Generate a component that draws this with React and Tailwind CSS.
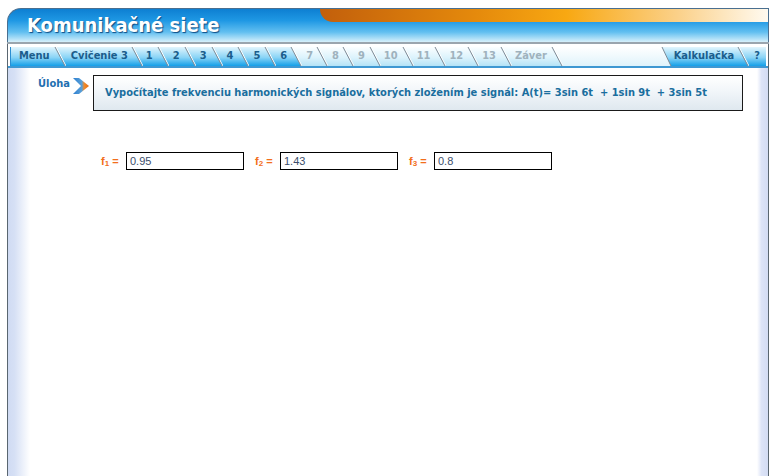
import React from 'react';

const tabFont = { fontFamily: '"DejaVu Sans Condensed", "DejaVu Sans", sans-serif' };

const tabs = [
  { label: 'Menu', on: true, pl: 'pl-[8px]', pr: 'pr-[4px]' },
  { label: 'Cvičenie 3', on: true, pl: 'pl-[5px]', pr: 'pr-[3px]' },
  { label: '1', on: true, pl: 'pl-[3px]' },
  { label: '2', on: true },
  { label: '3', on: true },
  { label: '4', on: true },
  { label: '5', on: true },
  { label: '6', on: true, pr: 'pr-[3px]' },
  { label: '7', pr: 'pr-[3px]' },
  { label: '8', pr: 'pr-[3px]' },
  { label: '9' },
  { label: '10', pl: 'pl-[3px]' },
  { label: '11', pl: 'pl-[3px]' },
  { label: '12', pl: 'pl-[3px]' },
  { label: '13', pl: 'pl-[3px]' },
  { label: 'Záver', pl: 'pl-[3px]' },
];

const fill = on => (on ? 'url(#tabOn)' : 'url(#tabOff)');

// slanted divider between two tabs
const Sep = ({ left, right }) => (
  <svg width="12" height="19" viewBox="0 0 12 19" className="block shrink-0">
    <polygon points="0,0 1,0 11,19 0,19" fill={left} />
    <polygon points="1,0 12,0 12,19 11,19" fill={right} />
    <line x1="2" y1="0" x2="12" y2="19" stroke="#ffffff" strokeWidth="1" />
    <line x1="1" y1="0" x2="11" y2="19" stroke="#7d8a96" strokeWidth="1" />
  </svg>
);

const Tab = ({ label, on, pl = 'pl-[4px]', pr = 'pr-[4px]' }) => (
  <div
    className={`h-[19px] flex items-center text-[11px] font-bold ${pl} ${pr} ${
      on ? 'text-[#1b5d8c] bg-[linear-gradient(#e2f5fd,#8ad4f6_55%,#149fe8)]' : 'text-[#9fb2bd] bg-[linear-gradient(#fbfeff,#dcf3fc_55%,#b5e3f6)]'
    }`}
    style={tabFont}
  >
    {label}
  </div>
);

const Arrow = () => (
  <svg width="18" height="18" viewBox="0 0 18 18" className="block">
    <defs>
      <linearGradient id="arr" x1="0" y1="0" x2="1" y2="0">
        <stop offset="0" stopColor="#2d7fd0" />
        <stop offset="0.55" stopColor="#5aa0d8" />
        <stop offset="0.7" stopColor="#f08a2a" />
        <stop offset="1" stopColor="#e86e10" />
      </linearGradient>
    </defs>
    <polygon points="1,1 7,1 17,9 7,17 1,17 9,9" fill="url(#arr)" />
  </svg>
);

const Field = ({ sub, value }) => (
  <div className="flex items-center gap-[6px]">
    <span className="text-[11px] font-bold text-[#f26e1c] w-[19px] whitespace-nowrap" style={{ fontFamily: '"Liberation Sans", Arial, sans-serif' }}>
      f<sub className="text-[8px] align-baseline relative top-[1px]">{sub}</sub> =
    </span>
    <div
      className="w-[118px] h-[18px] border border-black bg-white flex items-center pl-[3px] text-[11px] text-[#3c4e6c]"
      style={{ fontFamily: '"Liberation Sans", Arial, sans-serif' }}
    >
      {value}
    </div>
  </div>
);

export default function App() {
  return (
    <div className="w-[777px] h-[476px] bg-white overflow-hidden pt-[8px] pl-[7px]">
      <svg width="0" height="0" className="absolute">
        <defs>
          <linearGradient id="tabOn" x1="0" y1="0" x2="0" y2="1">
            <stop offset="0" stopColor="#e2f5fd" />
            <stop offset="0.55" stopColor="#8ad4f6" />
            <stop offset="1" stopColor="#149fe8" />
          </linearGradient>
          <linearGradient id="tabOff" x1="0" y1="0" x2="0" y2="1">
            <stop offset="0" stopColor="#fbfeff" />
            <stop offset="0.55" stopColor="#dcf3fc" />
            <stop offset="1" stopColor="#b5e3f6" />
          </linearGradient>
          <linearGradient id="tabNone" x1="0" y1="0" x2="0" y2="1">
            <stop offset="0" stopColor="#ffffff" />
            <stop offset="1" stopColor="#dff3fb" />
          </linearGradient>
        </defs>
      </svg>

      <div className="w-[762px] h-[468px] flex flex-col">
        {/* header */}
        <div className="relative h-[34px] shrink-0 rounded-tl-[14px] border-l border-t border-r border-[#4a6f90] bg-[linear-gradient(#0d7fd2,#1f98e4_35%,#62bff0_70%,#d6f0fb)] overflow-hidden">
          <div className="absolute top-0 left-[312px] right-0 h-[13px] rounded-bl-[16px] bg-[linear-gradient(to_right,#c25f0c,#e58a0c_35%,#f8a812_55%,#fbd18a_80%,#fffaf0)]" />
          <div
            className="relative pl-[19px] pt-[4px] text-[20px] leading-[24px] font-bold text-white [text-shadow:1px_1px_1px_#0b4b85]"
            style={tabFont}
          >
            Komunikačné siete
          </div>
        </div>
        <div className="h-[2px] shrink-0 bg-[#9aa5ae]" />
        <div className="h-[3px] shrink-0 border-l border-r border-[#5a6670] bg-white" />

        {/* tabs */}
        <div className="h-[21px] shrink-0 flex border-l border-r border-[#5a6670] pl-[2px] pr-[2px] bg-white">
          <div className="flex flex-1 h-[19px] border-l border-[#2b8ed2]">
            {tabs.map((t, i) => (
              <React.Fragment key={t.label}>
                <Tab {...t} />
                <Sep left={fill(t.on)} right={i < tabs.length - 1 ? fill(tabs[i + 1].on) : 'url(#tabNone)'} />
              </React.Fragment>
            ))}
            <div className="flex-1 bg-[linear-gradient(#ffffff,#dff3fb)]" />
            <svg width="11" height="19" viewBox="0 0 11 19" className="block shrink-0">
              <polygon points="0,0 1,0 10,19 0,19" fill="url(#tabNone)" />
              <polygon points="1,0 11,0 11,19 10,19" fill="url(#tabOn)" />
              <line x1="1" y1="0" x2="10" y2="19" stroke="#7d8a96" strokeWidth="1" />
            </svg>
            <Tab label="Kalkulačka" on pl="pl-[2px]" pr="pr-[3px]" />
            <Sep left="url(#tabOn)" right="url(#tabOn)" />
            <Tab label="?" on pl="pl-[5px]" pr="pr-[6px]" />
          </div>
        </div>
        <div className="h-[2px] shrink-0 border-l border-r border-[#5a6670] bg-[#3f98d2] -mt-[2px]" />

        {/* content */}
        <div className="flex-1 flex border-l border-r border-[#5a6670]">
          <div className="w-[22px] shrink-0 bg-[linear-gradient(to_right,#d0dbf3,#d6e0f5_30%,#ffffff)]" />
          <div className="flex-1 bg-white pt-[7px]">
            <div className="flex items-start">
              <div className="flex items-start pl-[8px] pt-[2px] w-[63px]">
                <span className="text-[11px] font-bold text-[#1f6fb0] leading-[14px]" style={tabFont}>
                  Úloha
                </span>
                <div className="ml-[2px]">
                  <Arrow />
                </div>
              </div>
              <div
                className="w-[650px] h-[36px] border border-[#1a1a1a] bg-[linear-gradient(#ffffff,#f3f7fa_40%,#dfe8ef)] flex items-center pl-[11px] text-[11px] font-bold text-[#1a6e9e]"
                style={tabFont}
              >
                Vypočítajte frekvenciu harmonických signálov, ktorých zložením je signál: A(t)= 3sin 6t&nbsp; + 1sin 9t&nbsp; + 3sin 5t
              </div>
            </div>
            <div className="flex gap-[11px] pl-[71px] mt-[41px]">
              <Field sub="1" value="0.95" />
              <Field sub="2" value="1.43" />
              <Field sub="3" value="0.8" />
            </div>
          </div>
          <div className="w-[11px] shrink-0 bg-[linear-gradient(to_right,#ffffff,#dde4f7_40%,#d3dcf3)]" />
        </div>
      </div>
    </div>
  );
}
